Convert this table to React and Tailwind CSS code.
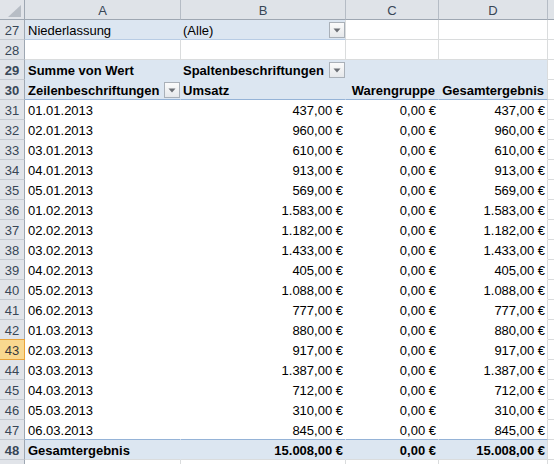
import React from "react";

const rows = [
  ["01.01.2013", "437,00 €", "0,00 €", "437,00 €"],
  ["02.01.2013", "960,00 €", "0,00 €", "960,00 €"],
  ["03.01.2013", "610,00 €", "0,00 €", "610,00 €"],
  ["04.01.2013", "913,00 €", "0,00 €", "913,00 €"],
  ["05.01.2013", "569,00 €", "0,00 €", "569,00 €"],
  ["01.02.2013", "1.583,00 €", "0,00 €", "1.583,00 €"],
  ["02.02.2013", "1.182,00 €", "0,00 €", "1.182,00 €"],
  ["03.02.2013", "1.433,00 €", "0,00 €", "1.433,00 €"],
  ["04.02.2013", "405,00 €", "0,00 €", "405,00 €"],
  ["05.02.2013", "1.088,00 €", "0,00 €", "1.088,00 €"],
  ["06.02.2013", "777,00 €", "0,00 €", "777,00 €"],
  ["01.03.2013", "880,00 €", "0,00 €", "880,00 €"],
  ["02.03.2013", "917,00 €", "0,00 €", "917,00 €"],
  ["03.03.2013", "1.387,00 €", "0,00 €", "1.387,00 €"],
  ["04.03.2013", "712,00 €", "0,00 €", "712,00 €"],
  ["05.03.2013", "310,00 €", "0,00 €", "310,00 €"],
  ["06.03.2013", "845,00 €", "0,00 €", "845,00 €"],
];

function DropBtn() {
  return (
    <div className="absolute right-0 top-[2px] flex h-[16px] w-[16px] items-center justify-center border border-[#a9b0b8] bg-gradient-to-b from-[#fbfbfb] to-[#e6e8eb]">
      <svg width="8" height="5" viewBox="0 0 8 5">
        <path d="M0.5 0.5 L7.5 0.5 L4 4.5 Z" fill="#6b6f75" />
      </svg>
    </div>
  );
}

function RowHdr({ n, active }) {
  if (active) {
    return (
      <div className="w-[25px] shrink-0 border-r border-b border-r-[#e8a33a] border-b-[#e8a33a] border-t border-t-[#e8a33a] -mt-px h-[21px] bg-[#f9d88f] text-center leading-[21px] text-[#3b3b3b]">
        {n}
      </div>
    );
  }
  return (
    <div className="w-[25px] shrink-0 border-r border-b border-r-[#9ea7b2] border-b-[#c6cbd2] bg-[#e1e4e9] text-center leading-[21px] text-[#384656]">
      {n}
    </div>
  );
}

export default function App() {
  return (
    <div
      className="h-[464px] w-[554px] overflow-hidden bg-white text-[13px] text-black"
      style={{ fontFamily: '"Liberation Sans", Arial, sans-serif' }}
    >
      {/* column header */}
      <div className="flex h-[20px] text-[#384656]">
        <div className="relative w-[25px] shrink-0 border-r border-b border-r-[#9ea7b2] border-b-[#9ea7b2] bg-[#e1e4e9]">
          <svg className="absolute left-[8px] top-[5px]" width="13" height="12" viewBox="0 0 13 12">
            <path d="M13 0 L13 12 L0 12 Z" fill="#b7bdc5" />
          </svg>
        </div>
        <div className="w-[156px] shrink-0 border-r border-b border-r-[#b5bcc5] border-b-[#9ea7b2] bg-[#dfe3e8] text-center leading-[21px]">A</div>
        <div className="w-[165px] shrink-0 border-r border-b border-r-[#b5bcc5] border-b-[#9ea7b2] bg-[#dfe3e8] text-center leading-[21px]">B</div>
        <div className="w-[93px] shrink-0 border-r border-b border-r-[#b5bcc5] border-b-[#9ea7b2] bg-[#dfe3e8] text-center leading-[21px]">C</div>
        <div className="w-[109px] shrink-0 border-r border-b border-r-[#b5bcc5] border-b-[#9ea7b2] bg-[#dfe3e8] text-center leading-[21px]">D</div>
        <div className="flex-1 border-b border-b-[#9ea7b2] bg-[#dfe3e8]"></div>
      </div>

      {/* row 27 */}
      <div className="flex h-[20px] whitespace-nowrap leading-[21px]">
        <RowHdr n={27} />
        <div className="w-[156px] shrink-0 border-r border-b border-r-[#dce6f1] border-b-[#b8cce4] bg-[#dce6f1] pl-[3px]">Niederlassung</div>
        <div className="relative w-[165px] shrink-0 border-r border-b border-r-[#dadcdd] border-b-[#b8cce4] bg-[#dce6f1] pl-[2px]">
          (Alle)
          <DropBtn />
        </div>
        <div className="w-[93px] shrink-0 border-r border-b border-[#dadcdd]"></div>
        <div className="w-[109px] shrink-0 border-r border-b border-[#dadcdd]"></div>
        <div className="flex-1 border-b border-[#dadcdd]"></div>
      </div>

      {/* row 28 */}
      <div className="flex h-[20px] whitespace-nowrap leading-[21px]">
        <RowHdr n={28} />
        <div className="w-[156px] shrink-0 border-r border-b border-[#dadcdd]"></div>
        <div className="w-[165px] shrink-0 border-r border-b border-[#dadcdd]"></div>
        <div className="w-[93px] shrink-0 border-r border-b border-[#dadcdd]"></div>
        <div className="w-[109px] shrink-0 border-r border-b border-[#dadcdd]"></div>
        <div className="flex-1 border-b border-[#dadcdd]"></div>
      </div>

      {/* row 29 */}
      <div className="flex h-[20px] whitespace-nowrap font-bold leading-[21px]">
        <RowHdr n={29} />
        <div className="w-[156px] shrink-0 border-r border-b border-[#dce6f1] bg-[#dce6f1] pl-[3px]">Summe von Wert</div>
        <div className="relative w-[165px] shrink-0 border-r border-b border-[#dce6f1] bg-[#dce6f1] pl-[2px]">
          Spaltenbeschriftungen
          <DropBtn />
        </div>
        <div className="w-[93px] shrink-0 border-r border-b border-[#dce6f1] bg-[#dce6f1]"></div>
        <div className="w-[109px] shrink-0 border-r border-b border-r-[#dadcdd] border-b-[#dce6f1] bg-[#dce6f1]"></div>
        <div className="flex-1 border-b border-[#dadcdd]"></div>
      </div>

      {/* row 30 */}
      <div className="flex h-[20px] whitespace-nowrap font-bold leading-[21px]">
        <RowHdr n={30} />
        <div className="relative w-[156px] shrink-0 border-r border-b border-r-[#dce6f1] border-b-[#95b3d7] bg-[#dce6f1] pl-[3px]">
          Zeilenbeschriftungen
          <DropBtn />
        </div>
        <div className="w-[165px] shrink-0 border-r border-b border-r-[#dce6f1] border-b-[#95b3d7] bg-[#dce6f1] pl-[2px]">Umsatz</div>
        <div className="w-[93px] shrink-0 border-r border-b border-r-[#dce6f1] border-b-[#95b3d7] bg-[#dce6f1] pr-[3px] text-right">Warengruppe</div>
        <div className="w-[109px] shrink-0 border-r border-b border-r-[#dadcdd] border-b-[#95b3d7] bg-[#dce6f1] pr-[3px] text-right">Gesamtergebnis</div>
        <div className="flex-1 border-b border-[#dadcdd]"></div>
      </div>

      {/* data rows */}
      {rows.map((r, i) => {
        const n = 31 + i;
        const last = i === rows.length - 1;
        return (
          <div key={n} className="flex h-[20px] whitespace-nowrap leading-[21px]">
            <RowHdr n={n} active={n === 43} />
            <div className={"w-[156px] shrink-0 border-r border-b border-r-white pl-[3px] " + (last ? "border-b-[#95b3d7]" : "border-b-white")}>{r[0]}</div>
            <div className={"w-[165px] shrink-0 border-r border-b border-r-white pr-[2px] text-right " + (last ? "border-b-[#95b3d7]" : "border-b-white")}>{r[1]}</div>
            <div className={"w-[93px] shrink-0 border-r border-b border-r-white pr-[2px] text-right " + (last ? "border-b-[#95b3d7]" : "border-b-white")}>{r[2]}</div>
            <div className={"w-[109px] shrink-0 border-r border-b border-r-[#dadcdd] pr-[2px] text-right " + (last ? "border-b-[#95b3d7]" : "border-b-white")}>{r[3]}</div>
            <div className="flex-1 border-b border-[#dadcdd]"></div>
          </div>
        );
      })}

      {/* row 48 */}
      <div className="flex h-[20px] whitespace-nowrap font-bold leading-[21px]">
        <RowHdr n={48} />
        <div className="w-[156px] shrink-0 border-r border-b border-r-[#dce6f1] border-b-[#dadcdd] bg-[#dce6f1] pl-[3px]">Gesamtergebnis</div>
        <div className="w-[165px] shrink-0 border-r border-b border-r-[#dce6f1] border-b-[#dadcdd] bg-[#dce6f1] pr-[2px] text-right">15.008,00 €</div>
        <div className="w-[93px] shrink-0 border-r border-b border-r-[#dce6f1] border-b-[#dadcdd] bg-[#dce6f1] pr-[2px] text-right">0,00 €</div>
        <div className="w-[109px] shrink-0 border-r border-b border-r-[#dadcdd] border-b-[#dadcdd] bg-[#dce6f1] pr-[2px] text-right">15.008,00 €</div>
        <div className="flex-1 border-b border-[#dadcdd]"></div>
      </div>

      {/* row 49 (only its top edge is visible) */}
      <div className="flex h-[20px]">
        <div className="w-[25px] shrink-0 border-r border-b border-r-[#9ea7b2] border-b-[#c6cbd2] bg-[#e1e4e9]"></div>
        <div className="w-[156px] shrink-0 border-r border-b border-[#dadcdd]"></div>
        <div className="w-[165px] shrink-0 border-r border-b border-[#dadcdd]"></div>
        <div className="w-[93px] shrink-0 border-r border-b border-[#dadcdd]"></div>
        <div className="w-[109px] shrink-0 border-r border-b border-[#dadcdd]"></div>
        <div className="flex-1 border-b border-[#dadcdd]"></div>
      </div>
    </div>
  );
}
